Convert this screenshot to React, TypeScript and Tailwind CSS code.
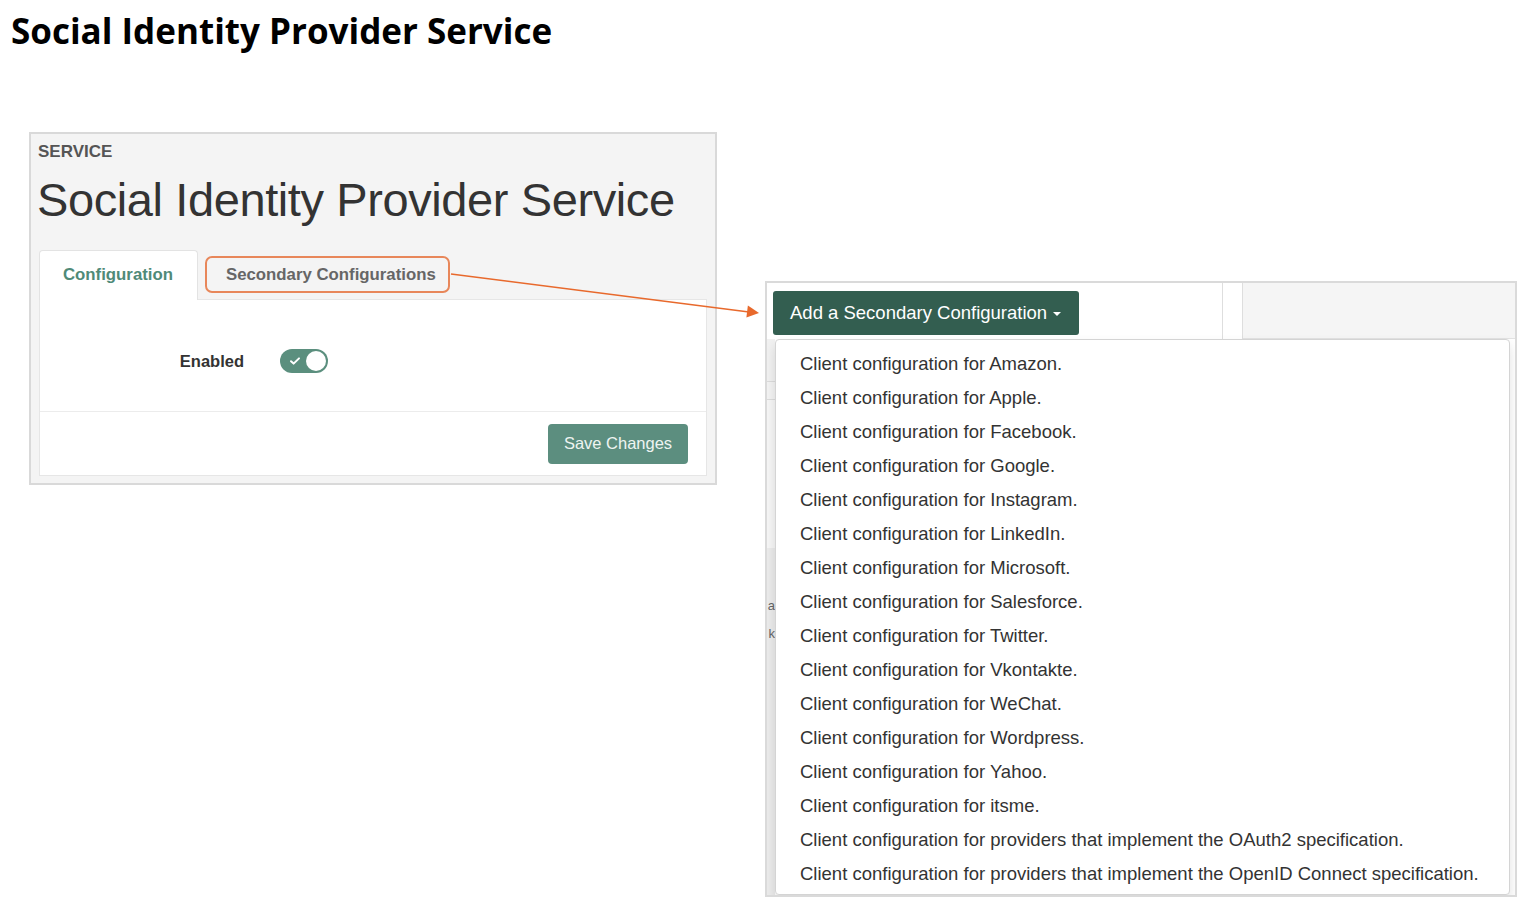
import React from "react";

const providers = [
  "Amazon",
  "Apple",
  "Facebook",
  "Google",
  "Instagram",
  "LinkedIn",
  "Microsoft",
  "Salesforce",
  "Twitter",
  "Vkontakte",
  "WeChat",
  "Wordpress",
  "Yahoo",
  "itsme",
];

const menuItems = [
  ...providers.map((p) => `Client configuration for ${p}.`),
  "Client configuration for providers that implement the OAuth2 specification.",
  "Client configuration for providers that implement the OpenID Connect specification.",
];

function Toggle() {
  return (
    <div className="flex h-[24px] w-[48px] items-center justify-between rounded-full bg-[#5b8f7e] pl-[9px] pr-[2px]">
      <svg width="12" height="10" viewBox="0 0 12 10" fill="none">
        <path d="M2 5.2l2.6 2.4L10 2.4" stroke="white" strokeWidth="2" strokeLinecap="round" strokeLinejoin="round" />
      </svg>
      <div className="h-[20px] w-[20px] rounded-full bg-white" />
    </div>
  );
}

function ServicePanel() {
  return (
    <div className="w-[688px] border-2 border-[#d9d9d9] bg-[#f4f4f4] px-[8px] pb-[7px] pt-[8px]">
      <div className="-ml-px text-[17px] font-bold leading-[20px] text-[#555]">SERVICE</div>
      <div className="-ml-[2px] mt-[10px] text-[47px] leading-[56px] tracking-[-0.4px] text-[#333]">
        Social Identity Provider Service
      </div>
      <div className="mt-[22px] flex h-[50px] items-start">
        <div className="relative flex h-[50px] w-[159px] items-center rounded-t-[4px] border border-b-0 border-[#e3e3e3] bg-white pb-px pl-[23px] text-[16.8px] font-bold text-[#4f8a78]">
          Configuration
        </div>
        <div className="ml-[7px] mt-[6px] flex h-[37px] w-[245px] items-center rounded-[7px] border-2 border-[#e8875a] pl-[19px] text-[16.8px] font-bold text-[#666]">
          Secondary Configurations
        </div>
      </div>
      <div className="-mt-px border border-[#e6e6e6] bg-white">
        <div className="flex items-center pb-[37px] pt-[49px]">
          <div className="w-[204px] text-right text-[16.5px] font-bold text-[#333]">Enabled</div>
          <div className="ml-[36px]">
            <Toggle />
          </div>
        </div>
        <div className="flex justify-end border-t border-[#ececec] pb-[11px] pr-[18px] pt-[12px]">
          <button className="h-[40px] w-[140px] rounded-[4px] bg-[#5c8e7f] text-[16.5px] text-[#eef4f1]">
            Save Changes
          </button>
        </div>
      </div>
    </div>
  );
}

function SecondaryPanel() {
  return (
    <div className="flex h-[616px] w-[752px] flex-col overflow-hidden border-2 border-[#dadada] bg-white">
      <div className="flex h-[56px]">
        <div className="flex-1 pl-[6px] pt-[8px]">
          <button className="flex h-[44px] w-[306px] items-center rounded-[3px] bg-[#335e50] pl-[17px] text-[18.5px] text-white">
            Add a Secondary Configuration
            <span className="ml-[6px] mt-[2px] h-0 w-0 border-x-[4px] border-t-[4px] border-x-transparent border-t-white" />
          </button>
        </div>
        <div className="w-[21px] border-x border-[#dedede]" />
        <div className="w-[272px] border-b border-[#e2e2e2] bg-[#f5f5f5]" />
      </div>
      <div className="flex flex-1">
        <div className="flex w-[8px] flex-col overflow-hidden bg-[#ebebeb] text-[13px] text-[#666]">
          <div className="h-[43px] border-b border-[#dcdcdc] bg-[#f1f1f1]" />
          <div className="h-[18px] border-b border-[#dcdcdc] bg-[#f3f3f3]" />
          <div className="h-[148px] bg-[#f6f6f6]" />
          <div className="mt-[44px] flex justify-end leading-[28px]">a</div>
          <div className="flex justify-end leading-[28px]">k</div>
        </div>
        <div className="mr-[5px] flex-1 rounded-[4px] border border-[#d4d4d4] bg-white pt-[7px] shadow-[0_6px_12px_rgba(0,0,0,0.12)]">
          {menuItems.map((item) => (
            <div key={item} className="pl-[24px] text-[18.5px] leading-[34px] text-[#333]">
              {item}
            </div>
          ))}
        </div>
      </div>
    </div>
  );
}

export default function App() {
  return (
    <div className="relative h-[908px] w-[1526px] overflow-hidden bg-white font-['Liberation_Sans',Arial,sans-serif]">
      <h1 className="pl-[11px] pt-[8px] font-['Open_Sans',sans-serif] text-[35px] font-bold leading-[46px] text-black">
        Social Identity Provider Service
      </h1>
      <div className="mt-[78px] flex items-start pl-[29px]">
        <ServicePanel />
        <div className="ml-[48px] mt-[149px]">
          <SecondaryPanel />
        </div>
      </div>
      <svg className="pointer-events-none absolute left-0 top-0" width="1526" height="908">
        <line x1="451" y1="274" x2="749" y2="312" stroke="#e8692c" strokeWidth="1.6" />
        <polygon points="759,313 747.9,305.6 746.4,317.5" fill="#e8692c" />
      </svg>
    </div>
  );
}
